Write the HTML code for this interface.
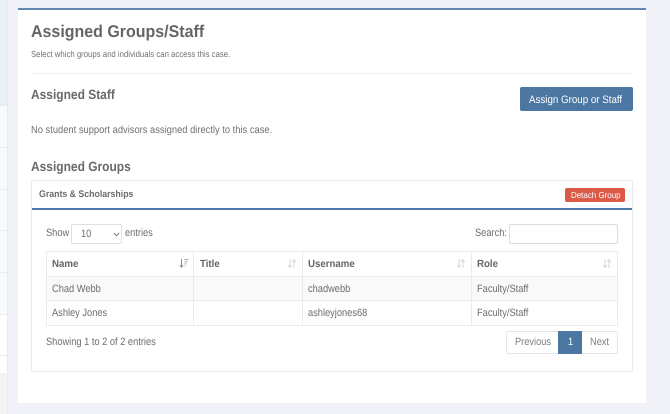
<!DOCTYPE html>
<html><head><meta charset="utf-8"><style>
html,body{margin:0;padding:0;width:670px;height:414px;overflow:hidden;background:#f0f2f7}
body{position:relative;font-family:"Liberation Sans",sans-serif;color:#6a6c6f;filter:blur(.3px);text-rendering:geometricPrecision}
div,span{position:absolute;box-sizing:border-box;white-space:nowrap}
.t{line-height:16px;transform-origin:0 50%}
.b{font-weight:bold}
.line{background:#e9ebed}
.c{font-size:10.6px;transform:scaleX(.875)}
.h{font-size:10.4px;font-weight:bold;color:#636569;transform:scaleX(.93)}
</style></head><body>
<div style="left:0;top:0;width:7px;height:106px;background:#eaf1f6"></div>
<div style="left:0;top:106px;width:7px;height:208px;background:#f8fafc"></div>
<div style="left:0;top:314px;width:7px;height:59px;background:#fff"></div>
<div style="left:0;top:373px;width:7px;height:41px;background:#f3f3f3"></div>
<div class="line" style="left:0;top:105px;width:7px;height:1px"></div>
<div class="line" style="left:0;top:147px;width:7px;height:1px"></div>
<div class="line" style="left:0;top:189px;width:7px;height:1px"></div>
<div class="line" style="left:0;top:230px;width:7px;height:1px"></div>
<div class="line" style="left:0;top:272px;width:7px;height:1px"></div>
<div class="line" style="left:0;top:314px;width:7px;height:1px"></div>
<div class="line" style="left:0;top:355px;width:7px;height:1px"></div>
<div style="left:7px;top:0;width:1px;height:414px;background:#e8eaee"></div>

<div style="left:18px;top:8px;width:628px;height:395px;background:#fff;border-top:2px solid #6088b0"></div>

<div class="t b" style="left:31px;top:22px;font-size:17px;line-height:20px;color:#636569;transform:scaleX(.94)">Assigned Groups/Staff</div>
<div class="t" style="left:31px;top:46px;font-size:8.8px;color:#6f7174;transform:scaleX(.884)">Select which groups and individuals can access this case.</div>
<div style="left:31px;top:73px;width:601px;height:1px;background:#f0f1f2"></div>

<div class="t b" style="left:31px;top:87px;font-size:13.4px;color:#68696c;transform:scaleX(.894)">Assigned Staff</div>
<div style="left:520px;top:87px;width:113px;height:24px;background:#4c77a2;border-radius:2px"></div>
<div class="t" style="left:529px;top:92px;font-size:10.8px;color:#fff;transform:scaleX(.904)">Assign Group or Staff</div>
<div class="t" style="left:31px;top:122.5px;font-size:10.4px;color:#6f7174;transform:scaleX(.9)">No student support advisors assigned directly to this case.</div>

<div class="t b" style="left:31px;top:159px;font-size:13.4px;color:#68696c;transform:scaleX(.894)">Assigned Groups</div>

<div style="left:31px;top:180px;width:602px;height:192px;border:1px solid #e9ebed;border-radius:2px;background:#fff"></div>
<div class="t b" style="left:39px;top:187px;font-size:9.6px;color:#6a6c6f;transform:scaleX(.913)">Grants &amp; Scholarships</div>
<div style="left:565px;top:188px;width:60px;height:14px;background:#dc5948;border-radius:2px"></div>
<div class="t" style="left:570.5px;top:187px;font-size:8.7px;color:#fff;transform:scaleX(.917)">Detach Group</div>
<div style="left:32px;top:208px;width:600px;height:2px;background:#4f7ba8"></div>

<div class="t c" style="left:46px;top:225px">Show</div>
<div style="left:71px;top:224px;width:51px;height:20px;border:1px solid #dfe1e3;border-radius:2px;background:#fff"></div>
<div class="t c" style="left:81px;top:226px">10</div>
<svg style="position:absolute;left:113px;top:232px" width="7" height="5" viewBox="0 0 7 5"><path d="M.8 1l2.7 2.7L6.2 1" fill="none" stroke="#777" stroke-width=".9"/></svg>
<div class="t c" style="left:125px;top:225px">entries</div>

<div class="t c" style="left:475px;top:225px">Search:</div>
<div style="left:509px;top:224px;width:109px;height:20px;border:1px solid #dadcde;border-radius:2px;background:#fff"></div>

<!-- table -->
<div style="left:46px;top:277px;width:572px;height:24px;background:#f9f9f9"></div>
<div class="line" style="left:46px;top:251px;width:572px;height:1px"></div>
<div class="line" style="left:46px;top:276px;width:572px;height:1px"></div>
<div class="line" style="left:46px;top:300px;width:572px;height:1px"></div>
<div class="line" style="left:46px;top:325px;width:572px;height:1px"></div>
<div class="line" style="left:46px;top:251px;width:1px;height:75px"></div>
<div class="line" style="left:193px;top:251px;width:1px;height:75px"></div>
<div class="line" style="left:302px;top:251px;width:1px;height:75px"></div>
<div class="line" style="left:471px;top:251px;width:1px;height:75px"></div>
<div class="line" style="left:617px;top:251px;width:1px;height:75px"></div>

<div class="t h" style="left:52px;top:256.5px">Name</div>
<div class="t h" style="left:200px;top:256.5px">Title</div>
<div class="t h" style="left:308px;top:256.5px">Username</div>
<div class="t h" style="left:477px;top:256.5px">Role</div>

<svg style="position:absolute;left:179px;top:258px" width="10" height="11" viewBox="0 0 10 11"><path d="M2.5 1v8M.8 7.2l1.7 2 1.7-2" fill="none" stroke="#8a8c8e" stroke-width="1"/><path d="M5.5 1.5h4M5.5 3.7h3M5.5 5.9h2M5.5 8.1h1" stroke="#a5a7a9" stroke-width="1"/></svg>
<svg style="position:absolute;left:287px;top:258px" width="10" height="11" viewBox="0 0 10 11"><path d="M3 1v8M1.3 7.2L3 9.2l1.7-2M7 10V2M5.3 3.8L7 1.8l1.7 2" fill="none" stroke="#d3d4d6" stroke-width="1"/></svg>
<svg style="position:absolute;left:456px;top:258px" width="10" height="11" viewBox="0 0 10 11"><path d="M3 1v8M1.3 7.2L3 9.2l1.7-2M7 10V2M5.3 3.8L7 1.8l1.7 2" fill="none" stroke="#d3d4d6" stroke-width="1"/></svg>
<svg style="position:absolute;left:602px;top:258px" width="10" height="11" viewBox="0 0 10 11"><path d="M3 1v8M1.3 7.2L3 9.2l1.7-2M7 10V2M5.3 3.8L7 1.8l1.7 2" fill="none" stroke="#d3d4d6" stroke-width="1"/></svg>

<div class="t c" style="left:52px;top:280.5px">Chad Webb</div>
<div class="t c" style="left:308px;top:280.5px">chadwebb</div>
<div class="t c" style="left:477px;top:280.5px">Faculty/Staff</div>
<div class="t c" style="left:52px;top:304.5px">Ashley Jones</div>
<div class="t c" style="left:308px;top:304.5px">ashleyjones68</div>
<div class="t c" style="left:477px;top:304.5px">Faculty/Staff</div>

<div class="t c" style="left:46px;top:333.5px">Showing 1 to 2 of 2 entries</div>

<div style="left:506px;top:331px;width:112px;height:23px;border:1px solid #e4e6e8;border-radius:2px;background:#fff"></div>
<div style="left:558px;top:331px;width:24px;height:23px;background:#4c77a2"></div>
<div class="t c" style="left:515px;top:334px;color:#7a7c7f">Previous</div>
<div class="t c" style="left:567.5px;top:334px;color:#fff">1</div>
<div class="t c" style="left:590px;top:334px;color:#7a7c7f">Next</div>
</body></html>
